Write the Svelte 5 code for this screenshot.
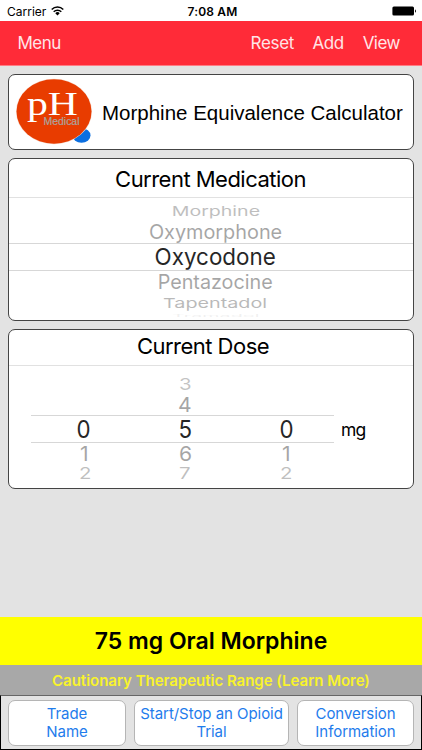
<script>
  const medications = [
    { name: 'Morphine', h: 20, size: 19, sx: 1.03, sy: 0.69, dy: 1, opacity: 0.25 },
    { name: 'Oxymorphone', h: 22, size: 21, sx: 0.945, sy: 0.94, dy: 0, opacity: 0.35 },
    { name: 'Oxycodone', h: 28, size: 23, sx: 0.975, sy: 1.02, dy: 0, opacity: 0.85, selected: true },
    { name: 'Pentazocine', h: 22, size: 21, sx: 0.94, sy: 0.94, dy: 0, opacity: 0.35 },
    { name: 'Tapentadol', h: 20, size: 19, sx: 1.04, sy: 0.72, dy: 0.5, opacity: 0.27 },
    { name: 'Tramadol', h: 9, size: 18, sx: 1.1, sy: 0.2, dy: -2.5, opacity: 0.06 },
  ];

  const wheels = [
    { digits: ['', '', '0', '1', '2'], lean: 1 },
    { digits: ['3', '4', '5', '6', '7'], lean: 0 },
    { digits: ['', '', '0', '1', '2'], lean: -1 },
  ];
  const slots = [
    { dy: 2, sx: 0.85, sy: 0.67, opacity: 0.23, dx: 1 },
    { dy: 1.5, sx: 0.88, sy: 0.86, opacity: 0.35, dx: 0.5 },
    { dy: 0.5, sx: 0.93, sy: 1, opacity: 0.85, dx: 0 },
    { dy: 0, sx: 0.88, sy: 0.86, opacity: 0.35, dx: 0.5 },
    { dy: -1, sx: 0.85, sy: 0.67, opacity: 0.25, dx: 1 },
  ];
</script>

<div class="screen">
  <header class="status">
    <div class="carrier">
      <span>Carrier</span>
      <svg width="13" height="10" viewBox="0 0 13 10">
        <g fill="none" stroke="#000" stroke-width="1.5">
          <path d="M.7 3.5a8.2 8.2 0 0 1 11.6 0" />
          <path d="M2.7 5.7a5.4 5.4 0 0 1 7.6 0" />
        </g>
        <path d="M6.5 9.4 4.3 7.2a3.1 3.1 0 0 1 4.4 0z" />
      </svg>
    </div>
    <span class="time">7:08 AM</span>
    <svg class="battery" width="25" height="10" viewBox="0 0 25 10">
      <rect x=".4" y=".4" width="21.6" height="9.2" rx="1.5" />
      <path d="M23 3.2q2 1.8 0 3.6z" />
    </svg>
  </header>

  <nav>
    <span class="menu">Menu</span>
    <span class="reset">Reset</span>
    <span class="add">Add</span>
    <span class="view">View</span>
  </nav>

  <main>
    <section class="card brand">
      <svg width="78" height="68" viewBox="0 0 78 68">
        <ellipse cx="65.5" cy="57.5" rx="9" ry="7.3" fill="#0b6fe0" />
        <ellipse cx="38" cy="33.5" rx="38" ry="32.7" fill="#f6d9cc" />
        <ellipse cx="38" cy="33.5" rx="37.5" ry="32.2" fill="#e83c00" />
        <text x="11" y="36.5" class="ph" textLength="51" lengthAdjust="spacingAndGlyphs">pH</text>
        <text x="27.5" y="46.5" class="medical" textLength="36" lengthAdjust="spacingAndGlyphs">Medical</text>
      </svg>
      <h1>Morphine Equivalence Calculator</h1>
    </section>

    <section class="card medication">
      <h2><span>Current Medication</span></h2>
      <div class="picker">
        {#each medications as m}
          <div class="row" class:selected={m.selected} style="height:{m.h}px">
            <span style="font-size:{m.size}px;opacity:{m.opacity};transform:translateY({m.dy}px) scale({m.sx},{m.sy})">{m.name}</span>
          </div>
        {/each}
      </div>
    </section>

    <section class="card dose">
      <h2><span>Current Dose</span></h2>
      <div class="dose-body">
        <div class="wheels">
          {#each wheels as wheel}
            <div class="wheel">
              {#each wheel.digits as digit, i}
                <div class="row slot{i}" class:selected={i === 2}>
                  <span style="opacity:{slots[i].opacity};transform:translate({slots[i].dx * wheel.lean}px,{slots[i].dy}px) scale({slots[i].sx},{slots[i].sy})">{digit}</span>
                </div>
              {/each}
            </div>
          {/each}
        </div>
        <span class="unit">mg</span>
      </div>
    </section>
  </main>

  <div class="result"><span>75 mg Oral Morphine</span></div>
  <div class="range"><span>Cautionary Therapeutic Range (Learn More)</span></div>
  <footer>
    <button class="trade">Trade<br />Name</button>
    <button class="trial">Start/Stop an Opioid<br />Trial</button>
    <button class="conversion">Conversion<br />Information</button>
  </footer>
</div>

<style>
  :global(body) { margin: 0; }
  .screen {
    width: 422px;
    height: 750px;
    display: flex;
    flex-direction: column;
    overflow: hidden;
    background: #e3e3e3;
    font-family: Inter, "Liberation Sans", sans-serif;
    color: #000;
    white-space: nowrap;
  }
  .screen * { box-sizing: border-box; }
  svg { display: block; flex: none; }
  .status {
    height: 21px;
    flex: none;
    display: grid;
    grid-template-columns: 1fr auto 1fr;
    align-items: center;
    padding: 1px 5px 0 7px;
    background: #fff;
    font-size: 12px;
  }
  .carrier { display: flex; align-items: center; gap: 5px; }
  .time { font-weight: 600; font-size: 12px; margin-left: 1px; letter-spacing: 0.15px; }
  .battery { justify-self: end; }
  nav {
    height: 45px;
    flex: none;
    display: flex;
    align-items: center;
    padding: 0 22px 0 17.5px;
    background: #ff2b38;
    border-bottom: 1px solid #ff7c84;
    color: #ffe5e7;
    font-size: 17px;
    letter-spacing: -0.5px;
  }
  .reset { margin-left: auto; letter-spacing: -0.3px; }
  .add { margin-left: 18.5px; }
  .view { margin-left: 19px; }
  main {
    flex: 1;
    display: flex;
    flex-direction: column;
    gap: 8px;
    padding: 8px 8px 0;
  }
  .card {
    flex: none;
    border: 1px solid #444;
    border-radius: 7px;
    background: #fff;
    overflow: hidden;
  }
  h1, h2 { margin: 0; font-weight: 400; }
  .brand { height: 76px; display: flex; align-items: center; padding-left: 7px; }
  h1 {
    margin-left: 8px;
    padding-top: 2px;
    font-family: "Liberation Sans", sans-serif;
    font-size: 20.5px;
  }
  .ph { font-family: "Liberation Serif", serif; font-size: 33px; fill: #fff; }
  .medical { font-family: "Liberation Sans", sans-serif; font-size: 10px; fill: #a9a49f; stroke: #a9a49f; stroke-width: 0.2; }
  h2 {
    display: flex;
    align-items: center;
    justify-content: center;
    border-bottom: 1px solid #e1e1e1;
    font-size: 22px;
    letter-spacing: -0.52px;
  }
  .medication { height: 163px; }
  .medication h2 { height: 39px; padding-top: 2px; padding-right: 1px; }
  .picker { padding-top: 3px; }
  .row { display: flex; align-items: center; justify-content: center; }
  .row span { display: block; line-height: 22px; }
  .picker .row span { flex: none; margin-left: 9px; }
  .selected { border: solid #d7d7d7; border-width: 1px 0; }
  .dose { height: 160px; }
  .dose h2 { height: 36px; padding-right: 16px; padding-bottom: 4px; }
  .dose-body { display: flex; }
  .wheels { width: 303px; margin-left: 22px; padding-top: 7px; display: flex; }
  .wheel { flex: 1; font-size: 24px; }
  .wheel .row { height: 22px; padding-left: 5px; }
  .wheel:last-child .row { padding-left: 7px; }
  .wheel .slot0, .wheel .slot4 { height: 20px; }
  .wheel .selected { height: 28px; }
  .unit { margin: 53px 0 0 7px; font-size: 17.5px; line-height: 22px; letter-spacing: -0.8px; }
  .result, .range { flex: none; display: flex; align-items: center; justify-content: center; }
  .result { height: 48px; background: #ff0; font-size: 23px; font-weight: 600; }
  .range { height: 30px; background: #a8a8a8; color: #f8f32b; font-size: 15px; font-weight: 600; letter-spacing: -0.02px; }
  footer {
    height: 55px;
    flex: none;
    display: flex;
    gap: 8px;
    padding: 4px 7px 3px;
    border: 1px solid #000;
    border-top-color: #666;
  }
  button {
    padding: 0;
    border: 1px solid #b5b5b5;
    border-radius: 7px;
    background: #fff;
    color: #1f7cec;
    font: 400 15px/18px Inter, sans-serif;
    letter-spacing: -0.05px;
  }
  .trade { width: 118px; }
  .trial { width: 155px; }
  .conversion { width: 117px; }
</style>
